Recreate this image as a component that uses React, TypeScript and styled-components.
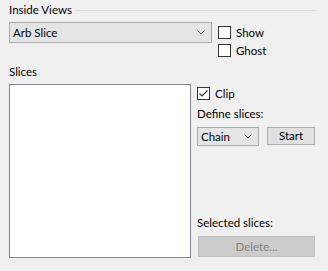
import React from "react";
import styled, { createGlobalStyle } from "styled-components";

const Global = createGlobalStyle`
  html, body { margin: 0; padding: 0; background: #f0f0f0; }
  body { font-family: "Lato", "Segoe UI", sans-serif; font-size: 11.5px; color: #000; }
`;

const Page = styled.div`
  width: 328px;
  height: 271px;
  box-sizing: border-box;
  padding: 2px 12px 0 9px;
  display: flex;
  flex-direction: column;
`;

const GroupHeader = styled.div`
  display: flex;
  align-items: center;
  gap: 3px;
  height: 16px;
  line-height: 16px;
`;

const GroupLine = styled.div`
  flex: 1;
  height: 1px;
  background: #dcdcdc;
  margin-top: 1px;
`;

const TopRow = styled.div`
  display: flex;
  gap: 6px;
  margin-top: 4px;
`;

const Combo = styled.div<{ $w: number; $h: number }>`
  width: ${(p) => p.$w}px;
  height: ${(p) => p.$h}px;
  box-sizing: border-box;
  border: 1px solid #acacac;
  background: #e5e5e5;
  display: flex;
  align-items: center;
  justify-content: space-between;
  padding: 0 6px 0 3px;
  line-height: 16px;
`;

const Chevron = () => (
  <svg width="8" height="5" viewBox="0 0 8 5">
    <path d="M0.5 0.5 L4 4 L7.5 0.5" fill="none" stroke="#606060" strokeWidth="1" />
  </svg>
);

const CheckColumn = styled.div`
  display: flex;
  flex-direction: column;
  gap: 5px;
  padding-top: 4px;
`;

const CheckRow = styled.label`
  display: flex;
  align-items: center;
  gap: 5px;
  height: 13px;
  line-height: 13px;
`;

const Box = styled.span`
  width: 13px;
  height: 13px;
  box-sizing: border-box;
  border: 1px solid #333;
  background: #fff;
  display: flex;
  align-items: center;
  justify-content: center;
`;

const Check = ({ checked, label }: { checked?: boolean; label: string }) => (
  <CheckRow>
    <Box>
      {checked && (
        <svg width="11" height="11" viewBox="0 0 11 11">
          <path d="M1.5 5.5 L4 8 L9.5 2.5" fill="none" stroke="#333" strokeWidth="1.2" />
        </svg>
      )}
    </Box>
    <span>{label}</span>
  </CheckRow>
);

const Label = styled.div<{ $mt: number }>`
  margin-top: ${(p) => p.$mt}px;
  line-height: 16px;
  height: 16px;
`;

const BottomRow = styled.div`
  display: flex;
  gap: 6px;
  margin-top: 4px;
`;

const ListBox = styled.div`
  width: 182px;
  height: 174px;
  box-sizing: border-box;
  border: 1px solid #828790;
  background: #fff;
`;

const SideColumn = styled.div`
  flex: 1;
  display: flex;
  flex-direction: column;
  padding-top: 3px;
`;

const ButtonRow = styled.div`
  display: flex;
  align-items: flex-start;
  gap: 8px;
  margin-top: 5px;
`;

const Button = styled.div<{ $w: number; $h: number; $disabled?: boolean }>`
  width: ${(p) => p.$w}px;
  height: ${(p) => p.$h}px;
  box-sizing: border-box;
  border: 1px solid ${(p) => (p.$disabled ? "#bfbfbf" : "#adadad")};
  background: ${(p) => (p.$disabled ? "#cccccc" : "#e1e1e1")};
  color: ${(p) => (p.$disabled ? "#838383" : "#000")};
  display: flex;
  align-items: center;
  justify-content: center;
  line-height: 16px;
`;

const DeleteButton = styled(Button)`
  margin: 5px 0 1px 1px;
`;

const Spacer = styled.div`
  flex: 1;
`;

export default function App() {
  return (
    <>
      <Global />
      <Page>
        <GroupHeader>
          <span>Inside Views</span>
          <GroupLine />
        </GroupHeader>
        <TopRow>
          <Combo $w={203} $h={21}>
            <span>Arb Slice</span>
            <Chevron />
          </Combo>
          <CheckColumn>
            <Check label="Show" />
            <Check label="Ghost" />
          </CheckColumn>
        </TopRow>
        <Label $mt={7}>Slices</Label>
        <BottomRow>
          <ListBox />
          <SideColumn>
            <Check checked label="Clip" />
            <Label $mt={6}>Define slices:</Label>
            <ButtonRow>
              <Combo $w={62} $h={19}>
                <span>Chain</span>
                <Chevron />
              </Combo>
              <Button $w={48} $h={18}>Start</Button>
            </ButtonRow>
            <Spacer />
            <Label $mt={0}>Selected slices:</Label>
            <DeleteButton $w={117} $h={21} $disabled>
              Delete...
            </DeleteButton>
          </SideColumn>
        </BottomRow>
      </Page>
    </>
  );
}
